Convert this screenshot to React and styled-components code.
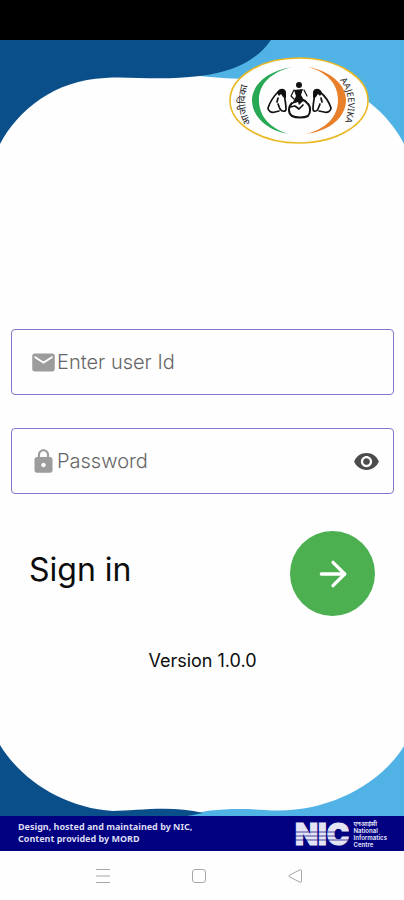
import React, { useState } from "react";
import styled, { createGlobalStyle } from "styled-components";
import { MdEmail, MdLock, MdRemoveRedEye } from "react-icons/md";
import { ArrowRight } from "lucide-react";

const GlobalStyle = createGlobalStyle`
  * {
    box-sizing: border-box;
  }
  body {
    margin: 0;
    background: #fefefe;
    font-family: Inter, Roboto, sans-serif;
    color: #0c0c0c;
  }
`;

function AajeevikaLogo() {
  return (
    <Logo viewBox="0 0 140 88" role="img" aria-label="Aajeevika">
      <defs>
        <path id="left-arc" d="M22 66 C14 52 14 34 25 14" />
        <path id="right-arc" d="M111 23 C121 36 122 54 113 72" />
      </defs>
      <ellipse cx="70" cy="43.5" rx="69" ry="42.5" fill="#fefefe" stroke="#e9b924" strokeWidth="1.6" />
      <path
        d="M63 10 C38 14 23 28 23 43 C23 60 39 74 60 77 C42 72 30 60 30 43 C30 27 42 15 63 10Z"
        fill="#27a854"
      />
      <path
        d="M79 10 C102 14 117 28 117 43 C117 60 101 74 77 77 C97 72 109 60 109 43 C109 27 98 15 79 10Z"
        fill="#e8802b"
      />
      <g fill="none" stroke="#111" strokeWidth="1.7" strokeLinecap="round" strokeLinejoin="round">
        <path d="M49 35 C45 39 41 45 39 51 C39 54 42 56 46 55 L50 54 M55 37 C56 42 57 47 57 52 C57 55 53 55 51 52 L49 47 M49 41 L48 45" />
        <path d="M91 35 C96 39 100 45 102 51 C102 54 99 56 95 55 L90 54 M86 37 C85 42 84 47 84 52 C84 55 88 55 89 52 L91 47 M92 41 L93 45" />
        <path d="M65 33 L62 39 L65 42 M75 33 L78 39" strokeWidth="1.2" />
        <path d="M63 46 C59 50 59 56 63 59 C67 61 75 61 79 59 C82 55 82 49 78 46 C76 43 74 43 73 43" strokeWidth="2" />
        <path d="M61 50 L66 49 L70 52 L74 48" />
      </g>
      <g fill="#111">
        <path d="M48 36 C49 31 56 30 57 35 L57 41 L54 40 L52 37 L50 39Z" />
        <path d="M93 36 C92 31 85 30 84 35 L84 41 L87 40 L89 37 L91 39Z" />
        <circle cx="70" cy="28" r="3" />
        <path d="M65 33 L74 32 L72 38 L75 43 L70 48 L69 45 L63 47 L67 39Z" />
      </g>
      <LogoText $size={10}>
        <textPath href="#left-arc">आजीविका</textPath>
      </LogoText>
      <LogoText $size={9}>
        <textPath href="#right-arc">AAJEEVIKA</textPath>
      </LogoText>
    </Logo>
  );
}

function NicLogo() {
  return (
    <Nic>
      <NicLetters viewBox="0 0 57 24" role="img" aria-label="NIC">
        <text x="0" y="23">NIC</text>
        <path d="M0 10H57 M0 14H57 M0 18H57" stroke="#000080" strokeWidth="0.7" />
      </NicLetters>
      <NicName>
        <span>एनआईसी</span>
        <span>National</span>
        <span>Informatics</span>
        <span>Centre</span>
      </NicName>
    </Nic>
  );
}

export default function App() {
  const [visible, setVisible] = useState(false);

  return (
    <Screen>
      <GlobalStyle />
      <StatusBar />
      <Header>
        <TopWave viewBox="0 0 404 110" preserveAspectRatio="none" aria-hidden="true">
          <path d="M190 0 H404 V104 C396 88 384 74 370 63 C340 40 300 38 260 39 C235 39 220 38 200 36Z" fill="#51b2e6" />
          <path d="M0 0 H271 C258 19 235 32 200 36 C160 41 130 36 105 38 C55 40 18 70 0 104Z" fill="#0b4f8a" />
        </TopWave>
        <AajeevikaLogo />
      </Header>
      <Form onSubmit={(e) => e.preventDefault()}>
        <Field>
          <MdEmail />
          <Input type="text" placeholder="Enter user Id" aria-label="Enter user Id" />
        </Field>
        <Field>
          <MdLock />
          <Input type={visible ? "text" : "password"} placeholder="Password" aria-label="Password" />
          <EyeButton type="button" aria-label="Show password" onClick={() => setVisible(!visible)}>
            <MdRemoveRedEye />
          </EyeButton>
        </Field>
        <SignInRow>
          <Title>Sign in</Title>
          <SubmitButton type="submit" aria-label="Sign in">
            <ArrowRight size={40} />
          </SubmitButton>
        </SignInRow>
        <Version>Version 1.0.0</Version>
      </Form>
      <BottomWave viewBox="0 0 404 73" preserveAspectRatio="none" aria-hidden="true">
        <path d="M188 73 C205 66 235 65 265 67 C325 72 380 42 404 3 V73Z" fill="#51b2e6" />
        <path d="M0 2 C22 38 65 65 113 68 C135 68 172 62 203 70 L188 73 H0Z" fill="#0b4f8a" />
      </BottomWave>
      <Footer>
        <Credit>
          Design, hosted and maintained by NIC,
          <br />
          Content provided by MORD
        </Credit>
        <NicLogo />
      </Footer>
      <NavBar>
        <NavButton aria-label="Recent apps">
          <svg viewBox="0 0 16 16">
            <path d="M1 1.5H15 M1 8H15 M1 14.5H15" />
          </svg>
        </NavButton>
        <NavButton aria-label="Home">
          <svg viewBox="0 0 16 16">
            <rect x="1.5" y="1.5" width="13" height="13" rx="2.5" />
          </svg>
        </NavButton>
        <NavButton aria-label="Back">
          <svg viewBox="0 0 16 16">
            <path d="M13 1.8 L2 7.4 Q1 8 2 8.6 L13 14.2 Q14.5 14.6 14.5 13 V3 Q14.5 1.4 13 1.8Z" />
          </svg>
        </NavButton>
      </NavBar>
    </Screen>
  );
}

const Screen = styled.div`
  display: flex;
  flex-direction: column;
  min-height: 100vh;
`;

const StatusBar = styled.div`
  height: 40px;
  background: #000;
`;

const Header = styled.header`
  position: relative;
  display: flex;
  justify-content: flex-end;
  padding: 17px 35px 5px 0;
`;

const TopWave = styled.svg`
  position: absolute;
  top: 0;
  left: 0;
  width: 100%;
  height: 100%;
`;

const Logo = styled.svg`
  position: relative;
  width: 140px;
  height: 88px;
`;

const LogoText = styled.text`
  font-family: "Noto Sans", sans-serif;
  font-size: ${(props) => props.$size}px;
  fill: #222;
`;

const Form = styled.form`
  flex: 1;
  display: flex;
  flex-direction: column;
  justify-content: flex-end;
  padding: 0 10px 71px 11px;
`;

const Field = styled.div`
  display: flex;
  align-items: center;
  height: 66px;
  margin-bottom: 33px;
  padding: 0 13px 0 18px;
  border: 1px solid #7d78c8;
  border-radius: 4px;

  svg {
    flex: none;
    width: 27px;
    height: 27px;
    color: #9c9c9c;
  }
`;

const Input = styled.input`
  flex: 1;
  min-width: 0;
  padding: 0;
  border: 0;
  outline: 0;
  background: none;
  font-family: inherit;
  font-size: 20px;
  font-weight: 300;
  color: #333;

  &::placeholder {
    color: #666;
    opacity: 1;
  }
`;

const EyeButton = styled.button`
  display: flex;
  padding: 0;
  border: 0;
  background: none;

  svg {
    color: #4c4c4c;
  }
`;

const SignInRow = styled.div`
  display: flex;
  align-items: center;
  justify-content: space-between;
  margin-top: 4px;
  padding: 0 19px 0 18px;
`;

const Title = styled.h1`
  margin: 0;
  padding-bottom: 8px;
  font-size: 32px;
  font-weight: 400;
  line-height: 40px;
`;

const SubmitButton = styled.button`
  display: flex;
  align-items: center;
  justify-content: center;
  width: 85px;
  height: 85px;
  padding: 0;
  border: 0;
  border-radius: 50%;
  background: #4caf50;
  color: #fff;
`;

const Version = styled.p`
  margin: 34px 0 0;
  text-align: center;
  font-size: 18px;
  line-height: 22px;
`;

const BottomWave = styled.svg`
  display: block;
  width: 100%;
  height: 73px;
`;

const Footer = styled.footer`
  display: flex;
  align-items: center;
  justify-content: space-between;
  height: 35px;
  padding: 0 17px 0 18px;
  background: #000080;
  color: #dcdcf2;
`;

const Credit = styled.p`
  margin: 0;
  padding-bottom: 1px;
  font-family: "Noto Sans", sans-serif;
  font-size: 9px;
  font-weight: 700;
  line-height: 12px;
`;

const Nic = styled.div`
  display: flex;
  align-items: center;
  gap: 1px;
`;

const NicLetters = styled.svg`
  width: 57px;
  height: 24px;
  overflow: visible;

  text {
    font-family: Inter, sans-serif;
    font-size: 30px;
    font-weight: 900;
    fill: #e4e4f4;
    stroke: #e4e4f4;
  }
`;

const NicName = styled.div`
  display: flex;
  flex-direction: column;
  font-family: Inter, "Noto Sans", sans-serif;
  font-size: 6px;
  font-weight: 700;
  line-height: 7px;
`;

const NavBar = styled.nav`
  display: flex;
  align-items: center;
  justify-content: center;
  gap: 80px;
  height: 49px;
  padding-right: 7px;
`;

const NavButton = styled.button`
  display: flex;
  padding: 0;
  border: 0;
  background: none;

  svg {
    width: 16px;
    height: 16px;
    fill: none;
    stroke: #a8a8a8;
  }
`;
